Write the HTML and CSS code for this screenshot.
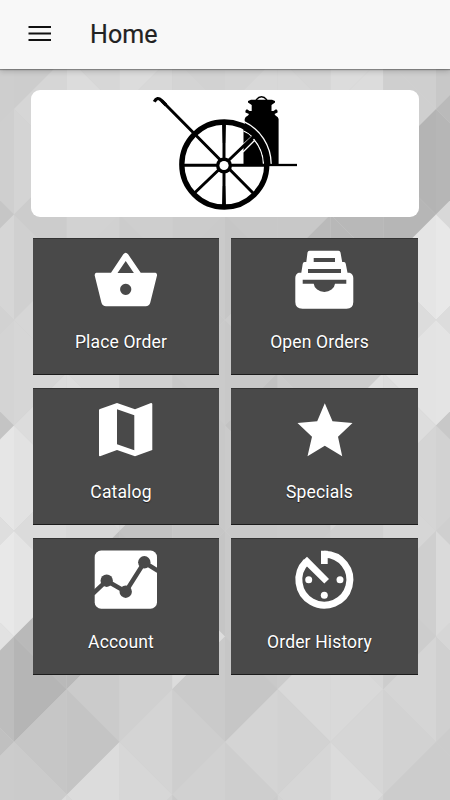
FILE: index.html
```
<!DOCTYPE html>
<html lang="en">
<head>
<meta charset="utf-8">
<title>Home</title>
<link rel="stylesheet" href="styles.css">
</head>
<body>
<svg class="backdrop" viewBox="0 0 450 800" aria-hidden="true"><g id="facets" transform="translate(14 3.5) scale(52.75)"></g></svg>
<header class="toolbar">
  <svg class="menu" viewBox="0 0 24 20"><path d="M.5 3h22.500M.5 9.500h22.500M.5 16h22.500"/></svg>
  <h1 class="title">Home</h1>
</header>
<main class="content">
  <div class="logo-card">
    <svg class="logo" viewBox="145 90 160 127">
      <path d="M243.500 165V128L244.700 125V119Q245 116.500 248 115.500L249 114L245.500 112.500Q245 110 247 109.300L249.500 111H251.700V105L248 102.500V101L251 99.700H272L275 101V102.500L271.500 105V111H273.500L276 109.300Q278 110 277.500 112.500L274.500 114L275.500 115.500Q278.600 117 278.600 119V165Z"/>
      <path class="line" d="M256 100Q261.500 93.500 267 100" stroke-width="1.300"/>
      <path class="white" d="M241 146.500L254 134.500M243 152L254.500 140.500M243.500 131Q248.500 133 251.500 136M253.500 139Q263 150 263.500 164" stroke-width="1.300"/>
      <path class="white" d="M243.500 121.300A47.500 47.500 0 0 1 271.200 164" stroke-width="1.300"/>
      <path class="line" d="M268 165H297" stroke-width="2.300"/>
      <circle class="line" cx="224.300" cy="164.500" r="42.500" stroke-width="5.300"/>
      <path class="line" d="M224 121V208M182 165.300H268M162 101L254.500 194.500M194 193.500L254 136" stroke-width="3"/>
      <path d="M222 121h4l-.8 22h-2.400zM222 208h4l-.8-22h-2.400z"/>
      <path class="line" d="M154.300 101.700Q157 96 161.500 100.500L166 105" stroke-width="3.200"/>
      <circle cx="224" cy="165.500" r="8"/>
      <circle class="hole" cx="224" cy="165.500" r="4.600"/>
    </svg>
  </div>
  <nav class="tiles">
    <a class="tile">
      <svg class="icon" viewBox="0 0 64 64"><path fill-rule="evenodd" d="M2.300 24.700H17L29.300 6.200Q31.700 3.200 34.100 6.200L46.700 24.700H61.500Q63.300 25 63 27.500L56.300 54.500Q55.200 58.300 51.700 58.300H12Q8.500 58.300 7.400 54.500L.7 27.500Q.5 25 2.300 24.700ZM31.700 13L23.500 25H39.900ZM31.700 35.700a5.600 5.600 0 1 0 .01 0Z"/></svg>
      <span class="label">Place Order</span>
    </a>
    <a class="tile">
      <svg class="icon" viewBox="0 0 64 64"><path fill-rule="evenodd" d="M16.500 2.700H45.500Q47.200 2.700 47.500 4.500L49.200 14H51Q52.500 14 52.800 16L54.500 24.700H56.500Q60.300 26 60.300 30V54Q60.300 60.700 53.500 60.700H9.500Q2.300 60.700 2.300 54V30Q2.300 26 5.700 24.700H8.300L9.700 16Q10 14 11.500 14H13.300L14.500 4.500Q14.800 2.700 16.500 2.700ZM20.700 10V14H42V10ZM15 21V25H48V21ZM9.700 31.700V35.700H20.700A10.700 9.200 0 0 0 42 35.700H53.300V31.700Z"/></svg>
      <span class="label">Open Orders</span>
    </a>
    <a class="tile">
      <svg class="icon" viewBox="0 0 64 64"><path fill-rule="evenodd" d="M6 11L23 5L41 11.300L57 5Q58.300 5 58.300 6V52L41 58.300L23 52L6 58.300Q5 58.300 5 57.500V12Q5 11.300 6 11ZM23 11.300V46.300L40.300 52.200V17.300Z"/></svg>
      <span class="label">Catalog</span>
    </a>
    <a class="tile">
      <svg class="icon" viewBox="0 0 64 64"><path d="M31.800 5.300L39.500 23.300L59.500 25L45 38.700L49.200 58.300L31.800 47.700L14.500 58.300L19 38.700L4.500 25L24.200 23.300Z"/></svg>
      <span class="label">Specials</span>
    </a>
    <a class="tile">
      <svg class="icon" viewBox="0 0 64 64"><rect x=".7" y="2.500" width="62.300" height="58.200" rx="6.500"/><g class="cut"><path d="M-1 45.500L12.700 32.700L31.700 43.700L50.300 14.300L64 22.800"/><circle cx="12.700" cy="32.700" r="6.200"/><circle cx="31.700" cy="43.700" r="6.200"/><circle cx="50.300" cy="14.300" r="6.200"/></g></svg>
      <span class="label">Account</span>
    </a>
    <a class="tile">
      <svg class="icon" viewBox="0 0 64 64"><path class="ring" d="M31.300 6.200A25.500 25.500 0 1 1 13.300 13.700"/><path d="M28 2.700H34.700V16H28ZM14 8.700L36 31L31.300 35.500L14 18.500L9.500 13Z"/><circle cx="15.700" cy="31.700" r="3.500"/><circle cx="47" cy="31.700" r="3.500"/><circle cx="31.300" cy="47.300" r="3.500"/></svg>
      <span class="label">Order History</span>
    </a>
  </nav>
</main>
<script src="facets.js"></script>
</body>
</html>
```
FILE: styles.css
```
* { box-sizing: border-box; }
body {
  margin: 0;
  width: 450px;
  height: 800px;
  overflow: hidden;
  background: #d0d0d0;
  font-family: Roboto, "Liberation Sans", sans-serif;
}
.backdrop {
  position: absolute;
  inset: 0;
  width: 450px;
  height: 800px;
  z-index: -1;
}
.toolbar {
  display: flex;
  align-items: center;
  height: 69px;
  padding-left: 28px;
  background: #f8f8f8;
  box-shadow: 0 1px 1px rgba(0, 0, 0, .3), 0 2px 6px rgba(0, 0, 0, .2);
}
.menu {
  width: 24px;
  height: 20px;
  margin-bottom: 1px;
  stroke: #111;
  stroke-width: 2;
}
.title {
  margin: 0 0 0 38px;
  font-size: 25px;
  font-weight: 400;
  letter-spacing: .1px;
  line-height: 30px;
  color: #222;
  -webkit-text-stroke: .2px #222;
}
.content { padding: 21px 32px 0 31px; }
.logo-card {
  display: flex;
  justify-content: center;
  width: 388px;
  height: 127px;
  border-radius: 9px;
  background: #fff;
}
.logo { width: 160px; height: 127px; }
.line { fill: none; stroke: #000; }
.white { fill: none; stroke: #fff; }
.hole { fill: #fff; }
.tiles {
  display: grid;
  grid-template-columns: 186px 187px;
  gap: 13px 12px;
  padding: 21px 0 0 2px;
}
.tile {
  display: flex;
  flex-direction: column;
  align-items: center;
  height: 137px;
  padding-top: 9px;
  border: solid #1c1c1c;
  border-width: 1px 0;
  border-top-color: #333;
  background: #494949;
}
.icon {
  width: 64px;
  height: 64px;
  fill: #fff;
}
.label {
  margin: 18px 10px 0 0;
  font-size: 17.5px;
  line-height: 24px;
  letter-spacing: .15px;
  color: #fff;
  text-shadow: 0 1px 1px rgba(0, 0, 0, .6);
}
.cut { fill: #494949; }
.cut path { fill: none; stroke: #494949; stroke-width: 4.5; }
.ring { fill: none; stroke: #fff; stroke-width: 7; }
```
FILE: facets.js
```
// Gray level of each triangle, one row per vertical strip, top to bottom.
const strips = [
  "ce ce cf c6 d6 d2 d4 c4 e6 de e8 e2 bd c0 cc cc",
  "cd d6 d4 cc d0 d6 d6 dc e2 db e4 b9 b5 c6 cb dc",
  "d7 dc d4 d2 d1 d0 da dd da d8 c0 b8 cb c4 dc d8",
  "dc d8 d6 ce cc cc d0 d0 d6 c2 c0 d0 d0 d4 d7 d2",
  "d2 d4 cc cb ca c9 ca c8 c8 c6 c5 dc ca ce d1 ca",
  "d4 d8 cc c8 c6 cc c8 c2 ca c9 c9 c9 c6 d4 ce cc",
  "d6 d8 cc c8 ba c4 c8 ca c8 ca cb cb d9 d2 d6 d4",
  "dc dc d0 b8 b8 dc cc e0 d6 d0 d0 d6 d9 d6 db d4",
  "cf cf b4 b6 e5 dc e3 dd d5 d6 cf cd d5 d2 cc cc",
  "c8 ba b6 d8 e8 dc e4 c8 d2 cf da d6 d0 cc cc cc"
];
const group = document.getElementById("facets");
strips.forEach((row, index) => {
  const x = index - 1;
  row.split(" ").forEach((gray, y) => {
    const onLeft = (x + y) % 2 === 0;
    const edge = onLeft ? x : x + 1;
    const apex = onLeft ? x + 1 : x;
    const facet = document.createElementNS("http://www.w3.org/2000/svg", "polygon");
    facet.setAttribute("points", `${edge},${y} ${edge},${y + 2} ${apex},${y + 1}`);
    facet.setAttribute("fill", `#${gray}${gray}${gray}`);
    group.appendChild(facet);
  });
});
```
